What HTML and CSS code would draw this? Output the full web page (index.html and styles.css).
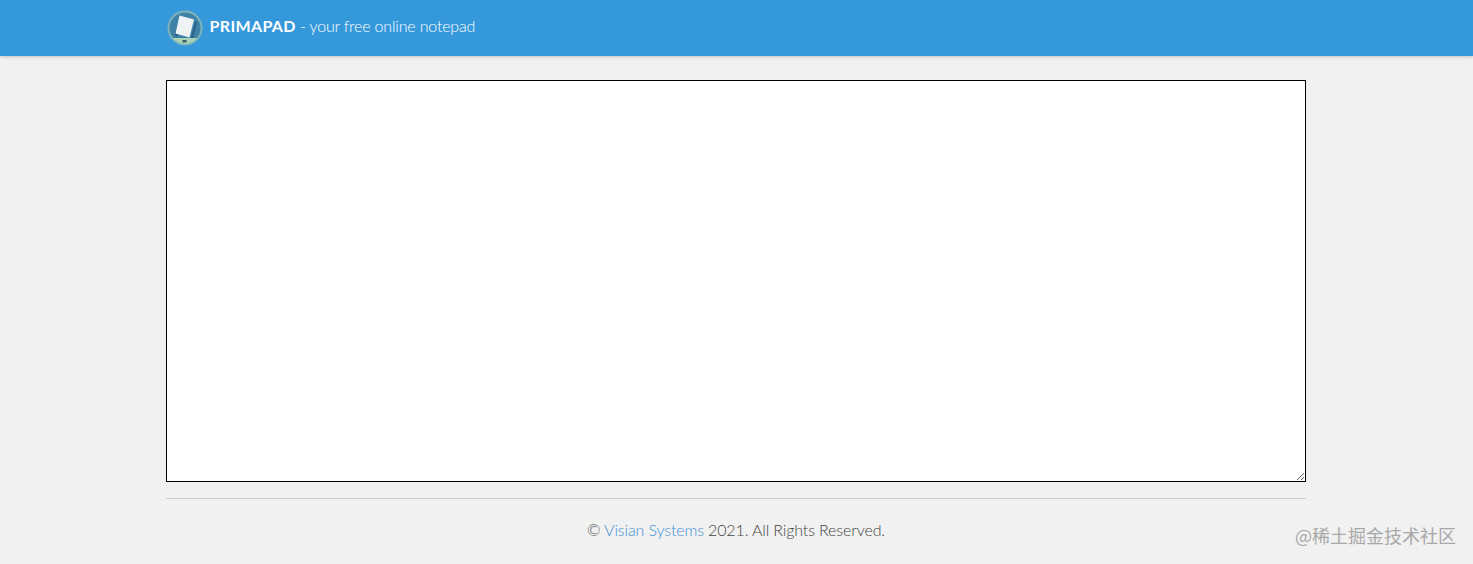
FILE: index.html
```html
<!DOCTYPE html>
<html>
<head>
    <title>PrimaPad - your free online notepad</title>
    <link rel="stylesheet" href="styles.css">
</head>
<body>
    <header class="topbar">
        <div class="container brand">
            <svg class="logo" width="36" height="36" viewBox="0 0 36 36">
                <defs>
                    <clipPath id="disc"><circle cx="18" cy="18" r="16"/></clipPath>
                </defs>
                <circle cx="18" cy="18" r="17.5" fill="#7fb3bb"/>
                <circle cx="18" cy="18" r="15.5" fill="#3f82a8"/>
                <g clip-path="url(#disc)">
                    <rect x="0" y="28" width="36" height="8" fill="#a9d3b4"/>
                </g>
                <path d="M7.5 25 L13 8 L15 8 L10 27 Z" fill="#2c5f86"/>
                <path d="M24 28 L28.5 11 L30 12 L26 28 Z" fill="#2c5f86"/>
                <path d="M12.5 5.5 L27 9.5 L22.5 27.5 L8.5 23.5 Z" fill="#eef2f5"/>
                <rect x="15.5" y="30" width="4" height="2.5" fill="#39606a"/>
            </svg>
            <p class="tagline"><strong>PRIMAPAD</strong> - your free online notepad</p>
        </div>
    </header>

    <main class="container">
        <textarea class="notepad"></textarea>
        <hr class="rule">
        <footer class="footer">
            &copy; <a href="#">Visian Systems</a> 2021. All Rights Reserved.
        </footer>
    </main>

    <div class="watermark">@稀土掘金技术社区</div>
</body>
</html>
```

FILE: styles.css
```css
html, body {
    height: 100%;
}
body {
    font-family: Lato, "Liberation Sans", sans-serif;
    font-weight: 300;
    background-color: #f1f1f1;
    color: #444;
    margin: 0;
    padding: 0 1px 0 0;
    overflow: hidden;
}
.container {
    width: 1140px;
    margin: 0 auto;
}
.topbar {
    background-color: #3498db;
    height: 56px;
    margin-right: -1px;
    box-shadow: 0 1px 3px rgba(0,0,0,0.2);
}
.brand {
    display: flex;
    align-items: flex-start;
    gap: 7px;
    padding-top: 10px;
}
.logo {
    flex: none;
}
.tagline {
    margin: 6px 0 0;
    color: #fff;
    font-size: 16px;
    line-height: 20px;
    letter-spacing: -0.18px;
}
.tagline strong {
    font-weight: 700;
    letter-spacing: 0.35px;
}
.notepad {
    display: block;
    box-sizing: border-box;
    width: 1140px;
    height: 402px;
    margin-top: 24px;
    background-color: #fff;
    border: 1px solid #000;
    outline: none;
}
.rule {
    border: 0;
    border-top: 1px solid #ccc;
    margin: 16px 0 0;
}
.footer {
    margin-top: 21px;
    text-align: center;
    font-size: 16px;
    line-height: 20px;
    letter-spacing: -0.13px;
}
.footer a {
    color: #3f8fd6;
    text-decoration: none;
}
.watermark {
    position: absolute;
    right: 17px;
    bottom: 18px;
    font-family: "Noto Sans CJK SC", sans-serif;
    font-weight: 400;
    font-size: 18px;
    line-height: 22px;
    color: #a8a8a8;
}
```
